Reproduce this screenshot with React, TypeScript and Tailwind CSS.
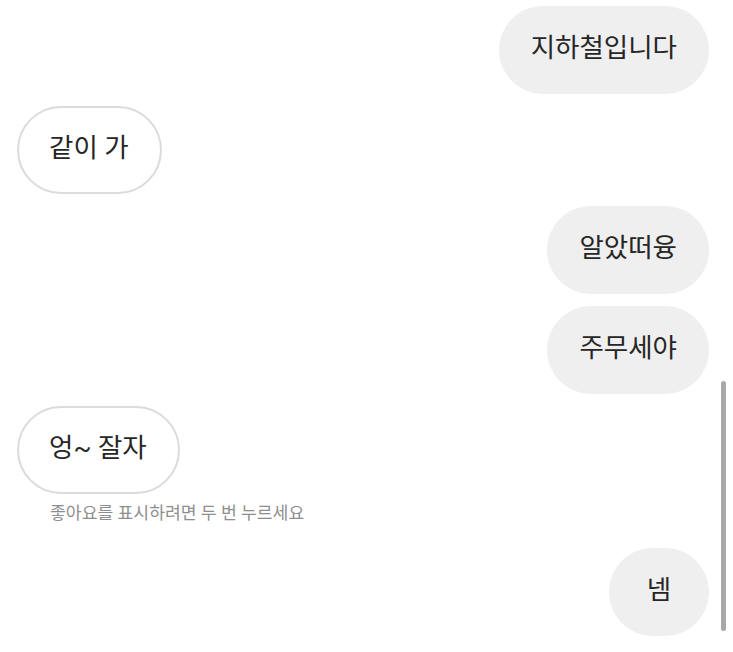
import React from "react";

const font = { fontFamily: 'Roboto, "Noto Sans CJK KR", "Noto Sans", sans-serif' };

function Mine({ text }: { text: string }) {
  return (
    <div className="flex justify-end">
      <div className="h-[88px] min-w-[100px] flex items-center justify-center px-8 pb-[5px] rounded-[44px] bg-[#efefef] text-[26.5px] text-[#262626]">
        {text}
      </div>
    </div>
  );
}

function Theirs({ text }: { text: string }) {
  return (
    <div className="flex justify-start">
      <div className="h-[88px] flex items-center pl-[30px] pr-[31px] pb-[5px] rounded-[44px] bg-white border-2 border-[#dbdbdb] text-[26.5px] text-[#262626]">
        {text}
      </div>
    </div>
  );
}

export default function App() {
  return (
    <div className="relative w-[733px] h-[652px] bg-white overflow-hidden" style={font}>
      <div className="flex flex-col gap-3 pt-[6px] pl-[17px] pr-[24px]">
        <Mine text="지하철입니다" />
        <Theirs text="같이 가" />
        <Mine text="알았떠융" />
        <Mine text="주무세야" />
        <div className="flex flex-col">
          <Theirs text="엉~ 잘자" />
          <div className="pl-[33px] pt-[8px] text-[17.2px] text-[#8e8e8e] leading-[22px]">
            좋아요를 표시하려면 두 번 누르세요
          </div>
        </div>
        <div className="mt-[12px]">
          <Mine text="넴" />
        </div>
      </div>
      <div className="absolute left-[721px] top-[381px] w-[5px] h-[250px] rounded-full bg-[#a8a8a8]" />
    </div>
  );
}
